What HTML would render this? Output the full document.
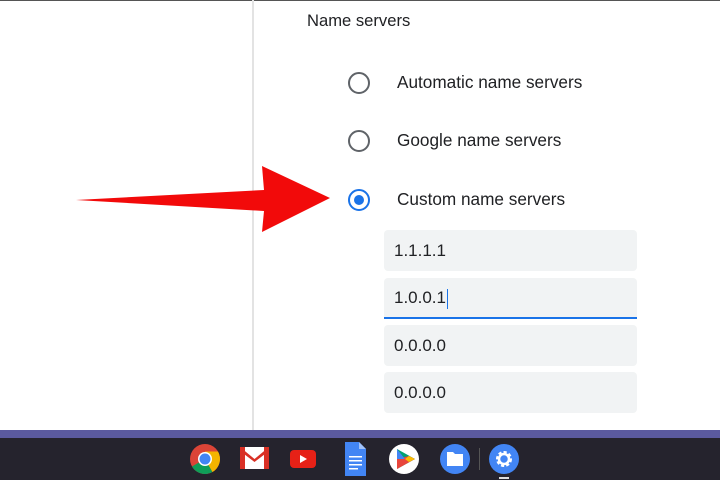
<!DOCTYPE html>
<html><head><meta charset="utf-8"><style>
*{margin:0;padding:0;box-sizing:border-box}
body{width:720px;height:480px;overflow:hidden;background:#fff;position:relative;font-family:"Liberation Sans",Arial,sans-serif;color:#202124}
.abs{position:absolute}
.lbl{font-size:17.2px;color:#202124}
.radio{position:absolute;width:22px;height:22px;border-radius:50%;border:2px solid #5f6368}
.field{position:absolute;left:384px;width:253px;background:#f1f3f4;border-radius:4px;font-size:17px;padding-left:10px}
</style></head><body>
<div class="abs" style="left:0;top:0;width:720px;height:1px;background:#555"></div>
<div class="abs" style="left:252px;top:0;width:2px;height:430px;background:#e3e3e3"></div>
<div class="abs lbl" style="left:307px;top:11px;font-size:16.6px">Name servers</div>

<div class="radio" style="left:348px;top:72px"></div>
<div class="abs lbl" style="left:397px;top:72px">Automatic name servers</div>
<div class="radio" style="left:348px;top:130px"></div>
<div class="abs lbl" style="left:397px;top:130px">Google name servers</div>
<div class="radio" style="left:348px;top:189px;border-color:#1a73e8"><div style="position:absolute;left:4px;top:4px;width:10px;height:10px;border-radius:50%;background:#1a73e8"></div></div>
<div class="abs lbl" style="left:397px;top:189px">Custom name servers</div>

<div class="field" style="top:230px;height:41px;line-height:41px">1.1.1.1</div>
<div class="field" style="top:278px;height:41px;line-height:39px;border-bottom:2px solid #1a73e8;border-radius:4px 4px 0 0">1.0.0.1<span style="display:inline-block;width:1px;height:20px;background:#1a73e8;vertical-align:middle;margin-left:1px"></span></div>
<div class="field" style="top:325px;height:41px;line-height:41px">0.0.0.0</div>
<div class="field" style="top:372px;height:41px;line-height:41px">0.0.0.0</div>

<svg class="abs" style="left:0;top:0" width="720" height="480">
<polygon points="76,200 264,190 262,166 330,198 262,232 264,211" fill="#f20a0a"/>
</svg>

<div class="abs" style="left:0;top:430px;width:720px;height:8px;background:#5b5a9f"></div>
<div class="abs" style="left:0;top:438px;width:720px;height:42px;background:#25232d"></div>

<svg class="abs" style="left:0;top:438px" width="720" height="42">
<g transform="translate(205,21)">
<circle r="15" fill="#db4437"/>
<path d="M0,0 L-13,7.5 A15,15 0 0 0 7.5,13 Z" fill="#0f9d58"/>
<path d="M0,0 L7.5,13 A15,15 0 0 0 13,-7.5 L0,-7.5 Z" fill="#f4b400"/>
<circle r="7" fill="#fff"/><circle r="5.5" fill="#4285f4"/>
</g>
<g transform="translate(240,9)">
<rect width="29" height="22" fill="#fff"/>
<rect width="5" height="22" fill="#d93025"/><rect x="24" width="5" height="22" fill="#d93025"/>
<path d="M0,0 L14.5,12 L29,0 L29,4 L14.5,15 L0,4Z" fill="#d93025"/>
</g>
<rect x="290" y="12" width="26" height="18" rx="4" fill="#e62117"/>
<polygon points="300,17 300,25 307,21" fill="#fff"/>
<path d="M345,4 L359,4 L366,11 L366,38 L345,38Z" fill="#4285f4"/>
<path d="M359,4 L366,11 L359,11Z" fill="#a1c2fa"/>
<g fill="#fff"><rect x="349" y="18" width="13" height="1.5"/><rect x="349" y="22" width="13" height="1.5"/><rect x="349" y="26" width="13" height="1.5"/><rect x="349" y="30" width="9" height="1.5"/></g>
<circle cx="404" cy="21" r="15" fill="#fff"/>
<polygon points="397,11 397,31 415,21" fill="#00a173"/>
<polygon points="397,21 397,31 415,21 409,18" fill="#e8453c"/>
<polygon points="409,18 415,21 409,24 405,21" fill="#fbbc04"/>
<polygon points="397,11 397,21 405,21" fill="#4285f4"/>
<circle cx="455" cy="21" r="15" fill="#4285f4"/>
<path d="M447,14 L453,14 L455,16 L463,16 L463,28 L447,28Z" fill="#fff"/>
<rect x="479" y="10" width="1" height="22" fill="#555"/>
<circle cx="504" cy="21" r="15" fill="#4285f4"/>
<circle cx="504" cy="21" r="6.5" fill="none" stroke="#fff" stroke-width="3" stroke-dasharray="3 2"/>
<circle cx="504" cy="21" r="5" fill="none" stroke="#fff" stroke-width="2.5"/>
<rect x="499" y="39" width="10" height="2" fill="#ddd"/>
</svg>
</body></html>
